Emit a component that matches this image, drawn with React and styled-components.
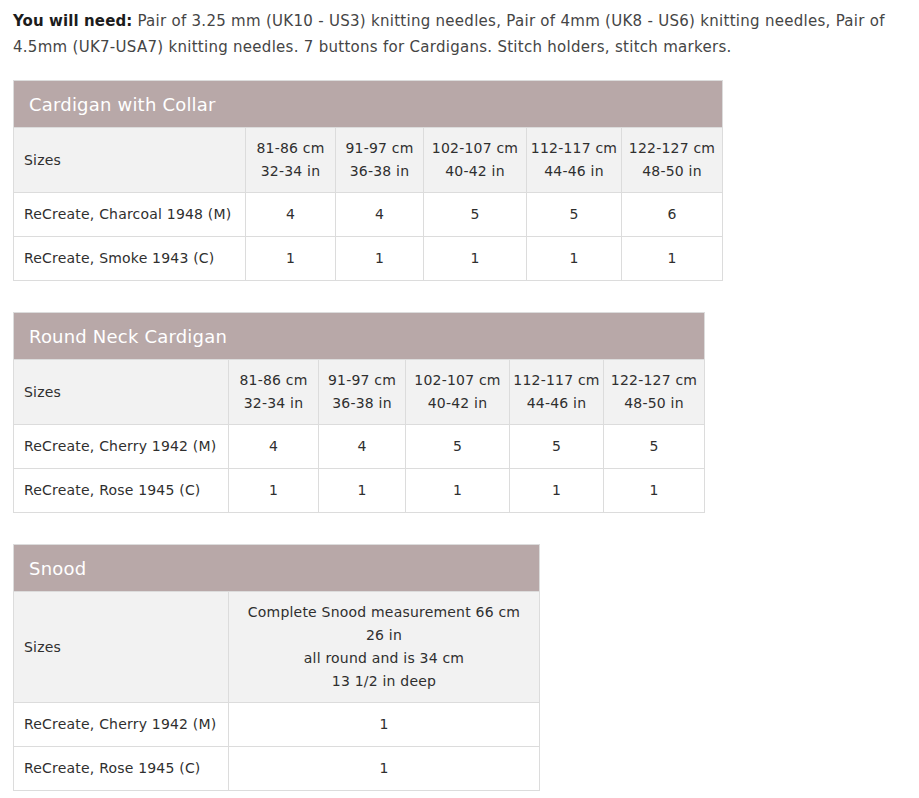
import React from "react";
import styled, { createGlobalStyle } from "styled-components";

const GlobalStyle = createGlobalStyle`
  body {
    margin: 0;
    background: #ffffff;
    font-family: "DejaVu Sans", "Open Sans", sans-serif;
    color: #2f2f2f;
  }
`;

const cardigan = {
  title: "Cardigan with Collar",
  width: 709,
  cols: [232, 90, 88, 103, 95, 101],
  sizes: [
    ["81-86 cm", "32-34 in"],
    ["91-97 cm", "36-38 in"],
    ["102-107 cm", "40-42 in"],
    ["112-117 cm", "44-46 in"],
    ["122-127 cm", "48-50 in"],
  ],
  rows: [
    ["ReCreate, Charcoal 1948 (M)", [4, 4, 5, 5, 6]],
    ["ReCreate, Smoke 1943 (C)", [1, 1, 1, 1, 1]],
  ],
};

const roundNeck = {
  title: "Round Neck Cardigan",
  width: 691,
  cols: [215, 90, 87, 104, 94, 101],
  sizes: cardigan.sizes,
  rows: [
    ["ReCreate, Cherry 1942 (M)", [4, 4, 5, 5, 5]],
    ["ReCreate, Rose 1945 (C)", [1, 1, 1, 1, 1]],
  ],
};

const snood = {
  title: "Snood",
  width: 526,
  cols: [215, 311],
  sizes: [
    [
      "Complete Snood measurement 66 cm",
      "26 in",
      "all round and is 34 cm",
      "13 1/2 in deep",
    ],
  ],
  rows: [
    ["ReCreate, Cherry 1942 (M)", [1]],
    ["ReCreate, Rose 1945 (C)", [1]],
  ],
};

function SizeTable({ data }) {
  return (
    <Table $width={data.width}>
      <colgroup>
        {data.cols.map((w, i) => (
          <col key={i} style={{ width: w }} />
        ))}
      </colgroup>
      <Caption>{data.title}</Caption>
      <tbody>
        <HeadRow>
          <LabelCell>Sizes</LabelCell>
          {data.sizes.map((lines, i) => (
            <ValueCell key={i}>
              {lines.map((l, j) => (
                <div key={j}>{l}</div>
              ))}
            </ValueCell>
          ))}
        </HeadRow>
        {data.rows.map(([label, values]) => (
          <BodyRow key={label}>
            <LabelCell>{label}</LabelCell>
            {values.map((v, i) => (
              <ValueCell key={i}>{v}</ValueCell>
            ))}
          </BodyRow>
        ))}
      </tbody>
    </Table>
  );
}

export default function App() {
  return (
    <>
      <GlobalStyle />
      <Wrapper>
        <Intro>
          <strong>You will need:</strong> Pair of 3.25 mm (UK10 - US3) knitting
          needles, Pair of 4mm (UK8 - US6) knitting needles, Pair of 4.5mm
          (UK7-USA7) knitting needles. 7 buttons for Cardigans. Stitch holders,
          stitch markers.
        </Intro>
        <SizeTable data={cardigan} />
        <SizeTable data={roundNeck} />
        <SizeTable data={snood} />
      </Wrapper>
    </>
  );
}

const Wrapper = styled.div`
  padding: 8px 13px 0 13px;
  display: flex;
  flex-direction: column;
  align-items: flex-start;
  gap: 31px;
  font-size: 14px;
  letter-spacing: 0.2px;
`;

const Intro = styled.p`
  margin: 0 0 -11px 0;
  width: 890px;
  font-size: 15px;
  letter-spacing: 0.28px;
  line-height: 26px;
  color: #454545;
  strong {
    font-weight: bold;
    color: #1c1c1c;
    letter-spacing: 0.1px;
  }
`;

const Table = styled.table`
  width: ${(p) => p.$width}px;
  table-layout: fixed;
  border-collapse: collapse;
  border: 1px solid #dcdcdc;
`;

const Caption = styled.caption`
  background: #b8a8a8;
  color: #ffffff;
  text-align: left;
  font-size: 18px;
  font-weight: 500;
  letter-spacing: 0.2px;
  height: 47px;
  line-height: 47px;
  padding: 0 15px;
  border: 1px solid #dcdcdc;
  border-bottom: none;
  box-sizing: border-box;
`;

const HeadRow = styled.tr`
  background: #f2f2f2;
  td {
    padding-top: 9px;
    padding-bottom: 9px;
  }
`;

const BodyRow = styled.tr`
  background: #ffffff;
  height: 44px;
`;

const LabelCell = styled.td`
  border: 1px solid #dcdcdc;
  padding: 0 10px;
  text-align: left;
  white-space: nowrap;
  line-height: 23px;
  color: #2f2f2f;
`;

const ValueCell = styled.td`
  border: 1px solid #dcdcdc;
  padding: 0 2px;
  text-align: center;
  white-space: nowrap;
  line-height: 23px;
  color: #2f2f2f;
`;
